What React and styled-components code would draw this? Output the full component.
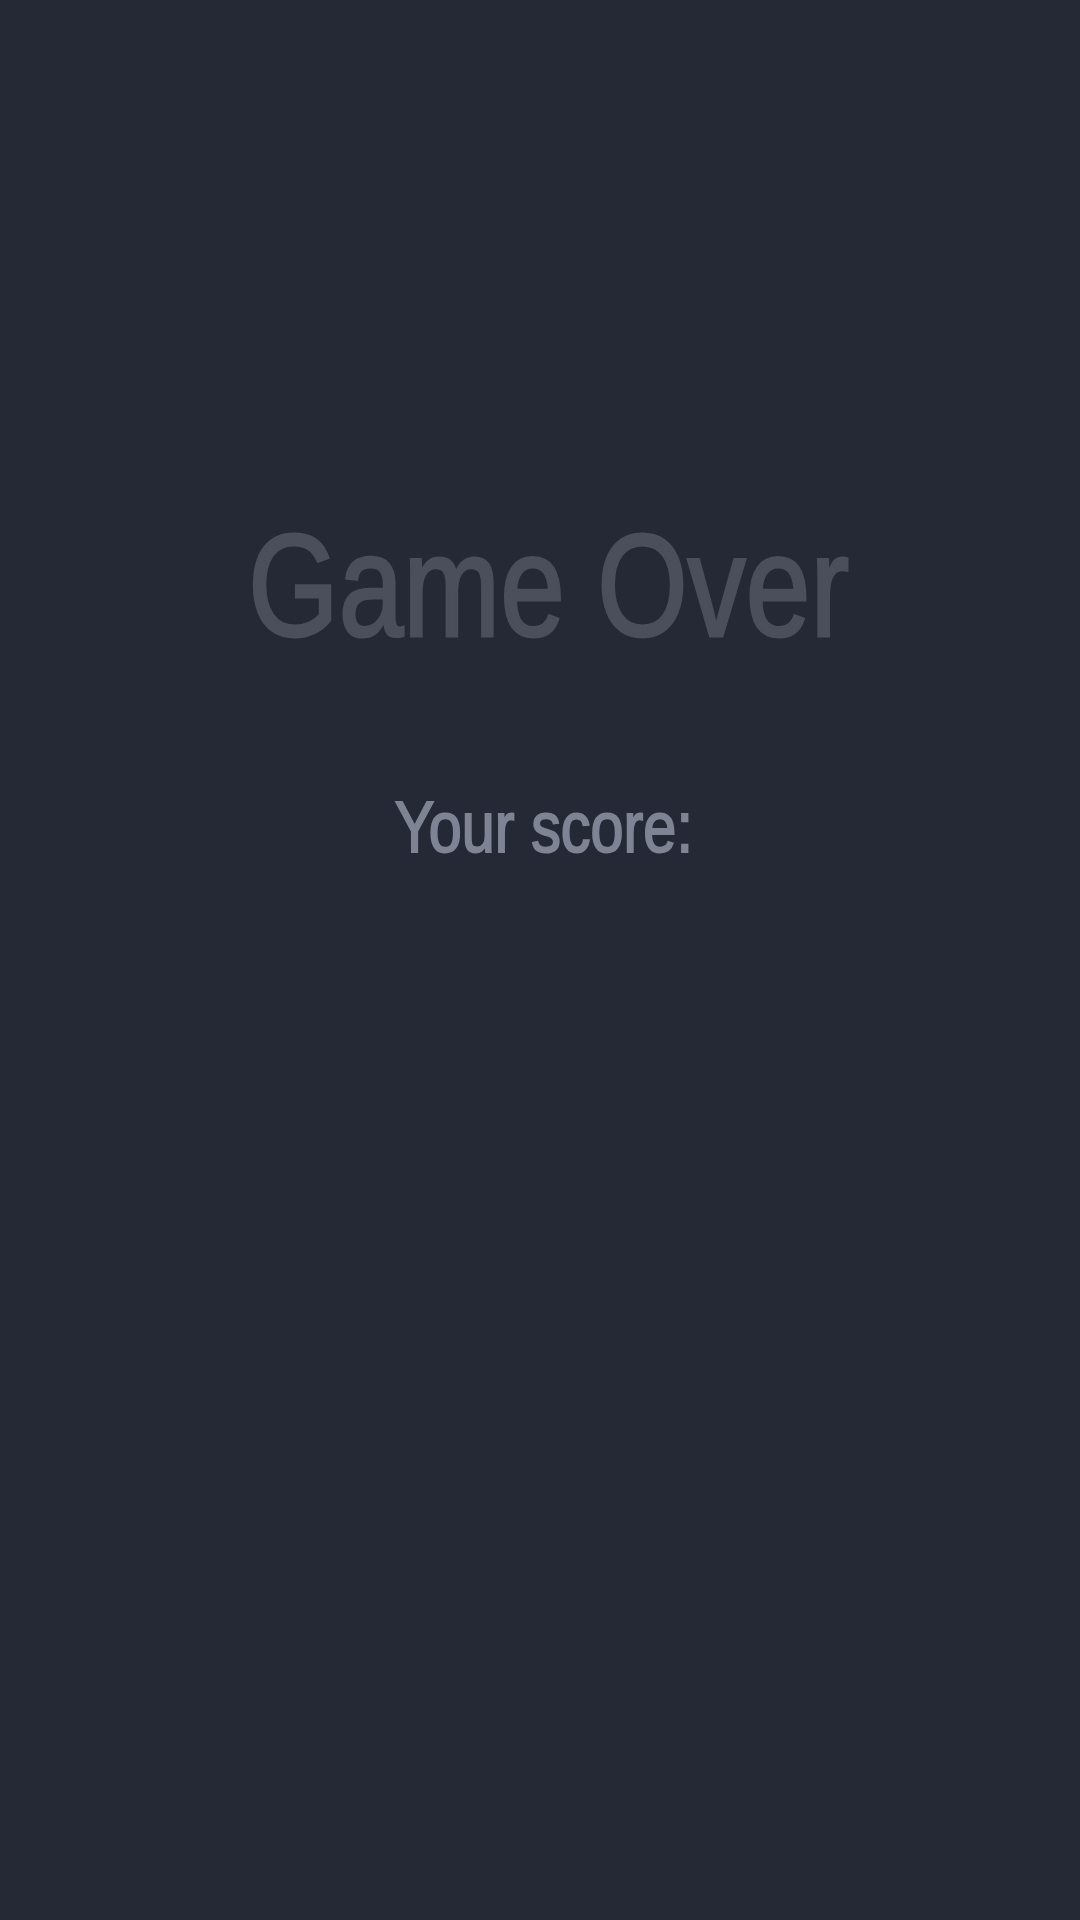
import React from 'react';
import styled, { createGlobalStyle } from 'styled-components';

const GlobalStyle = createGlobalStyle`
    html, body {
        margin: 0;
        padding: 0;
        background: #252935;
    }
`;

const Screen = styled.main`
    width: 1080px;
    height: 1920px;
    box-sizing: border-box;
    padding-top: 503px;
    display: flex;
    flex-direction: column;
    align-items: center;
    background: #252935;
    font-family: "Liberation Sans Narrow", "Liberation Sans", Arial, sans-serif;
`;

const Title = styled.h1`
    margin: 0 0 0 18px;
    font-size: 145px;
    font-weight: 400;
    line-height: normal;
    color: #4a4f5b;
    -webkit-text-stroke: 3px #4a4f5b;
`;

const Score = styled.h2`
    margin: 116px 0 0 8px;
    font-size: 72px;
    font-weight: 400;
    line-height: normal;
    color: #7e8493;
    -webkit-text-stroke: 2px #7e8493;
`;

// narrow face isn't installed, so squeeze the regular one
const Condensed = styled.span`
    display: inline-block;
    white-space: nowrap;
    transform: scaleX(${props => props.$ratio});
    transform-origin: center;
`;

function App() {
    return (
        <>
            <GlobalStyle />
            <Screen>
                <Title><Condensed $ratio={0.802}>Game Over</Condensed></Title>
                <Score><Condensed $ratio={0.825}>Your score:</Condensed></Score>
            </Screen>
        </>
    );
}

export default App;
